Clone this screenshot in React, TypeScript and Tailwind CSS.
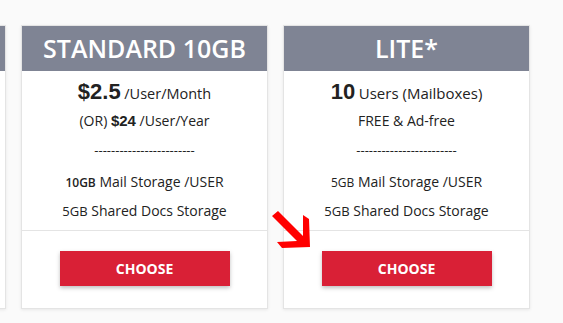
import React from "react";

interface Plan {
  title: string;
  lines: React.ReactNode[];
  features: React.ReactNode[];
}

const open = "font-['Open_Sans',sans-serif]";
const arial = "font-['Liberation_Sans',Arial,sans-serif]";

const plans: Plan[] = [
  {
    title: "STANDARD 10GB",
    lines: [
      <>
        <span className={`${arial} font-bold text-[22px]`}>$2.5</span>{" "}
        <span className="text-[14.5px]">/User/Month</span>
      </>,
      <>
        (OR) <span className={`${arial} font-bold text-[15px]`}>$24</span> /User/Year
      </>,
    ],
    features: [
      <>
        <span className="font-semibold text-[12px]">10GB</span> Mail Storage /USER
      </>,
      <>
        <span className="font-medium text-[13px]">5GB</span> Shared Docs Storage
      </>,
    ],
  },
  {
    title: "LITE*",
    lines: [
      <>
        <span className={`${arial} font-bold text-[22px]`}>10</span>{" "}
        <span className="text-[15px]">Users (Mailboxes)</span>
      </>,
      <>FREE &amp; Ad-free</>,
    ],
    features: [
      <>
        <span className="font-medium text-[12px]">5GB</span> Mail Storage /USER
      </>,
      <>
        <span className="font-medium text-[13px]">5GB</span> Shared Docs Storage
      </>,
    ],
  },
];

const cardShell = "w-[247px] shrink-0 bg-white border border-[#e4e4e4] shadow-[0_1px_3px_rgba(0,0,0,0.08)]";

// Previous plan card, scrolled mostly out of view (only its edge shows)
function EdgeCard() {
  return (
    <div className={`${cardShell} h-[284px]`}>
      <div className="h-[45px] bg-[#7f8494]" />
    </div>
  );
}

function PlanCard({ plan }: { plan: Plan }) {
  return (
    <div className={cardShell}>
      {/* Header */}
      <div className="h-[45px] bg-[#7f8494] flex items-center justify-center text-white text-[25px] font-semibold leading-none whitespace-nowrap">
        {plan.title}
      </div>

      {/* Body */}
      <div className="pt-[6px] pb-[5px] text-center text-[#222] text-[14px]">
        {plan.lines.map((line, i) => (
          <div key={i} className="h-[29px] leading-[29px] whitespace-nowrap">
            {line}
          </div>
        ))}
        <div className="h-[29px] leading-[31px] text-[13px]">
          ------------------------
        </div>
        <div className="mt-[3px]">
          {plan.features.map((f, i) => (
            <div key={i} className="h-[29px] leading-[29px] whitespace-nowrap">
              {f}
            </div>
          ))}
        </div>
      </div>

      {/* Footer */}
      <div className="border-t border-[#e4e4e4] pt-[20px] pb-[22px] flex justify-center">
        <button className="w-[170px] h-[35px] bg-[#d92036] text-white text-[14px] font-bold shadow-[0_2px_4px_rgba(0,0,0,0.25)]">
          CHOOSE
        </button>
      </div>
    </div>
  );
}

export default function App() {
  return (
    <div className={`relative w-[563px] h-[323px] overflow-hidden bg-[#fafafa] ${open}`}>
      <div className="flex items-start gap-[15px] pt-[25px] ml-[-241px]">
        <EdgeCard />
        {plans.map((p) => (
          <PlanCard key={p.title} plan={p} />
        ))}
      </div>

      {/* Red pointer arrow */}
      <svg className="absolute left-0 top-0 pointer-events-none" width="563" height="323" viewBox="0 0 563 323">
        <polygon
          fill="#ff0000"
          points="278,211 303,236 303,215 309,219 310,247 282,248 277,242 297,241 272,216"
        />
      </svg>
    </div>
  );
}
